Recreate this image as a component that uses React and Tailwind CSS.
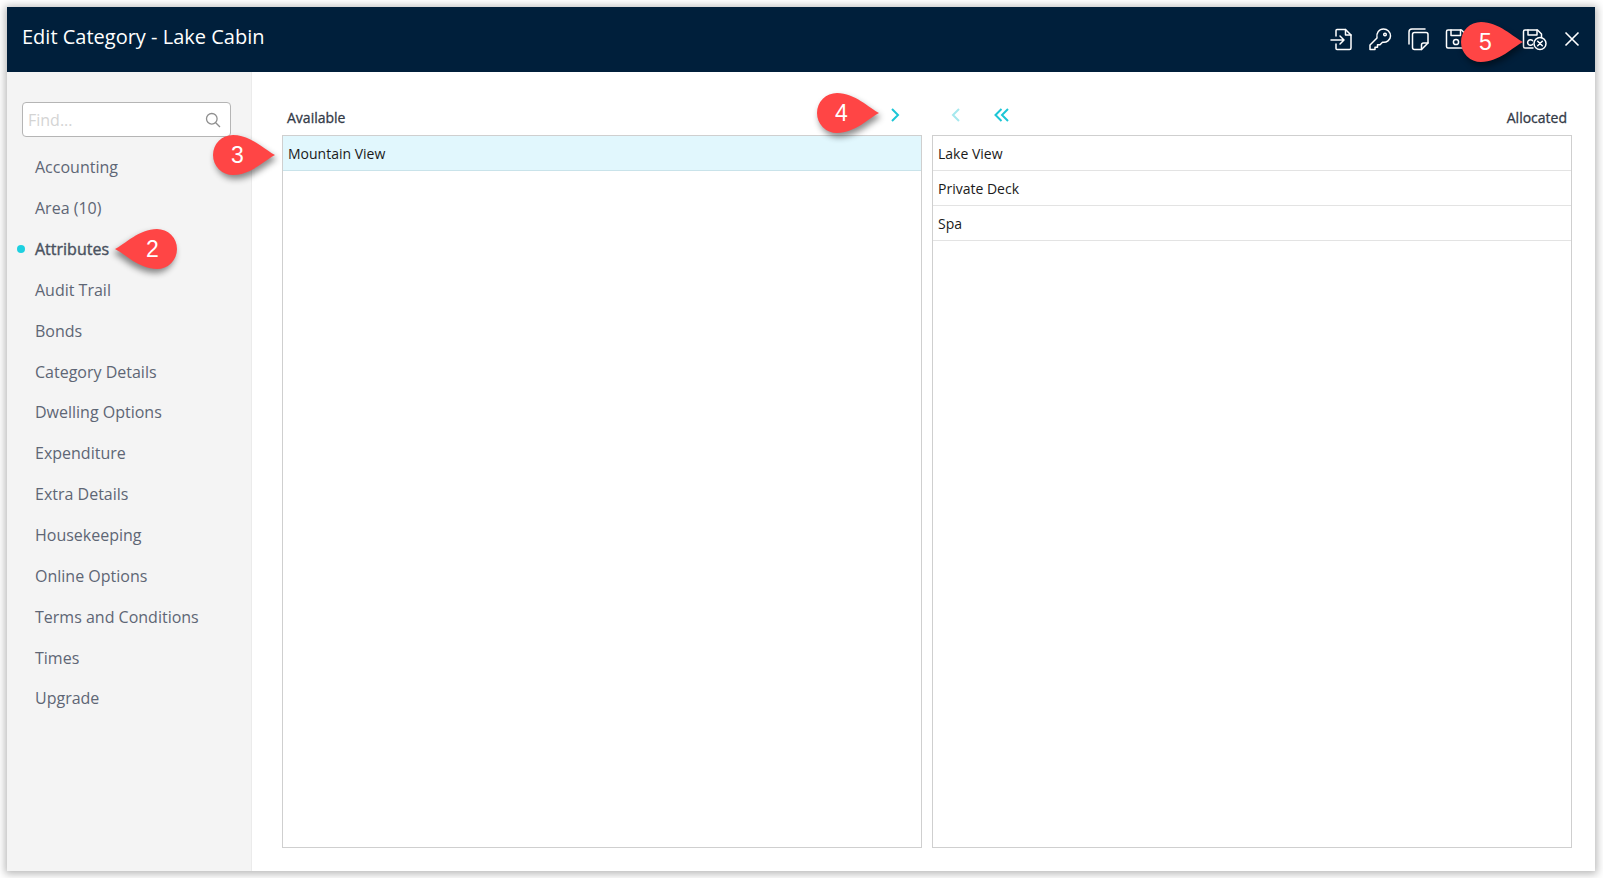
import React from "react";

const sideItems = ["Accounting","Area (10)","Attributes","Audit Trail","Bonds","Category Details","Dwelling Options","Expenditure","Extra Details","Housekeeping","Online Options","Terms and Conditions","Times","Upgrade"];

function Pin({ n, left, className }) {
  return (
    <div className={"absolute w-[62px] h-[40px] z-10 " + className}>
      <svg viewBox="0 0 62 40" className={"absolute inset-0 w-full h-full overflow-visible drop-shadow-[2px_4px_3px_rgba(0,0,0,0.45)] " + (left ? "-scale-x-100" : "")}>
        <path d="M62 20C52 15 38 0 20 0A20 20 0 0 0 20 40C38 40 52 25 62 20Z" fill="#ff4545" />
      </svg>
      <span className={"absolute top-0 h-[40px] w-[49px] flex items-center justify-center text-white text-[23px] font-['Liberation_Sans',sans-serif] " + (left ? "right-0" : "left-0")}>{n}</span>
    </div>
  );
}

const ic = { fill: "none", stroke: "#fff", strokeWidth: 1.5, strokeLinecap: "round", strokeLinejoin: "round" };

function IconIn() {
  return <svg width="24" height="24" viewBox="0 0 24 24" {...ic}><path d="M6 9V3.500A1 1 0 0 1 7 2.500H15.500L21 8V21A1.500 1.500 0 0 1 19.500 22.500H7A1 1 0 0 1 6 21.500V17" /><path d="M15.500 2.500V8H21" /><path d="M1 13H14M10 9L14 13L10 17" /></svg>;
}
function IconKey() {
  return <svg width="24" height="24" viewBox="0 0 24 24" {...ic}><path d="M15.500 2A7 7 0 0 1 22.500 9C22.500 13 18.500 16 14.500 15.200L12 17.700H9.500V20.200H7V22.500H2V18L9 11C8 6 11 2 15.500 2Z" /><circle cx="17" cy="7.500" r="1.300" /></svg>;
}
function IconCopy() {
  return <svg width="24" height="24" viewBox="0 0 24 24" {...ic}><path d="M3 17V5A3 3 0 0 1 6 2H19" /><path d="M8.500 5.500H20A2 2 0 0 1 22 7.500V16L15.500 22.500H8.500A2 2 0 0 1 6.500 20.500V7.500A2 2 0 0 1 8.500 5.500Z" /><path d="M22 16H17.500A2 2 0 0 0 15.500 18V22.500" /></svg>;
}
function IconSave() {
  return <svg width="24" height="24" viewBox="0 0 24 24" {...ic}><path d="M4 3H17.500L21.500 7V19.500A1.500 1.500 0 0 1 20 21H4A1.500 1.500 0 0 1 2.500 19.500V4.500A1.500 1.500 0 0 1 4 3Z" /><path d="M7 3V8.500H16.500V3" /><circle cx="12" cy="15" r="2.600" /></svg>;
}
function IconSaveX() {
  return <svg width="26" height="24" viewBox="0 0 26 24" {...ic}><path d="M12 21H4A1.500 1.500 0 0 1 2.500 19.500V4.500A1.500 1.500 0 0 1 4 3H16.500L20.500 7V10.500" /><path d="M7 3V8H16V3" /><path d="M11.500 13.600A2.800 2.800 0 1 0 11.500 17.400" /><circle cx="19" cy="16.500" r="6" /><path d="M16.700 14.200L21.300 18.800M21.300 14.200L16.700 18.800" /></svg>;
}
function IconClose() {
  return <svg width="18" height="18" viewBox="0 0 18 18" fill="none" stroke="#fff" strokeWidth="1.600"><path d="M2.500 2.500L15.500 15.500M15.500 2.500L2.500 15.500" /></svg>;
}
function IconSearch() {
  return <svg width="16" height="16" viewBox="0 0 16 16" fill="none" stroke="#8f8f8f" strokeWidth="1.300"><circle cx="6.800" cy="6.800" r="5.300" /><path d="M10.700 10.700L15 15" /></svg>;
}
function Chev({ d, className, width = 12 }) {
  return <svg width={width} height="14" viewBox={`0 0 ${width} 14`} fill="none" strokeWidth="2" className={className}><path d={d} stroke="currentColor" /></svg>;
}

function Row({ children, active }) {
  return (
    <div className={"h-[35px] pl-[5px] flex items-center border-b text-[14px] text-[#1a1a1a] " + (active ? "bg-[#e1f7fd] border-[#c9e3ea]" : "border-[#e3e3e3]")}>{children}</div>
  );
}

export default function App() {
  return (
    <div className="w-[1603px] h-[878px] pl-[7px] pt-[7px] pr-[8px] pb-[7px] bg-white overflow-hidden relative font-['Open_Sans',sans-serif]">
      <div className="w-full h-full flex flex-col bg-white shadow-[0_1px_8px_2px_rgba(0,0,0,0.28)]">
        <header className="h-[65px] shrink-0 bg-[#001f3b] flex items-center justify-between pl-[15px] pr-[14px]">
          <h1 className="text-[20px] text-white font-normal -mt-[5px]">Edit Category - Lake Cabin</h1>
          <div className="flex items-center gap-[14px] -mt-[2px]">
            <IconIn /><IconKey /><IconCopy /><IconSave />
            <div className="w-[25px]" />
            <IconSaveX />
            <div className="ml-[2px]"><IconClose /></div>
          </div>
        </header>
        <div className="flex-1 flex min-h-0">
          <aside className="w-[245px] shrink-0 bg-[#f4f4f4] border-r border-[#ebebeb] pt-[30px] pl-[15px] pr-[20px]">
            <div className="h-[35px] rounded-[4px] border border-[#b5b5b5] bg-white flex items-center justify-between pl-[5px] pr-[9px]">
              <span className="text-[16px] text-[#d4d4d4]">Find...</span>
              <IconSearch />
            </div>
            <nav className="mt-[10px] flex flex-col">
              {sideItems.map((s) => (
                <div key={s} className={"h-[40.85px] flex items-center pl-[13px] text-[16px] relative " + (s === "Attributes" ? "font-medium text-[#4a5260] [-webkit-text-stroke:0.4px_#4a5260]" : "text-[#5e6675]")}>
                  {s === "Attributes" && <span className="absolute -left-[5px] w-[8px] h-[8px] rounded-full bg-[#1dd0e0]" />}
                  {s}
                </div>
              ))}
            </nav>
          </aside>
          <main className="flex-1 min-w-0 pl-[30px] pr-[23px] pb-[23px] flex flex-col">
            <div className="grid grid-cols-2 gap-[10px] h-[63px] shrink-0 items-end pb-[7px]">
              <div className="flex items-center justify-between pl-[5px] pr-[21px]">
                <span className="text-[14px] font-medium text-[#333a47] [-webkit-text-stroke:0.3px_#333a47]">Available</span>
                <Chev d="M3 1L9 7L3 13" className="text-[#1cc6d6] -mt-[6px]" />
              </div>
              <div className="flex items-center pl-[18px] pr-[5px]">
                <Chev d="M9 1L3 7L9 13" className="text-[#a5e8ee] -mt-[6px]" />
                <Chev d="M8.500 1L2.500 7L8.500 13M15 1L9 7L15 13" width={18} className="text-[#1cc6d6] ml-[31px] -mt-[6px]" />
                <span className="ml-auto text-[14px] font-medium text-[#333a47] [-webkit-text-stroke:0.3px_#333a47]">Allocated</span>
              </div>
            </div>
            <div className="flex-1 grid grid-cols-2 gap-[10px] min-h-0">
              <div className="border border-[#cfcfcf]"><Row active>Mountain View</Row></div>
              <div className="border border-[#cfcfcf]">
                <Row>Lake View</Row><Row>Private Deck</Row><Row>Spa</Row>
              </div>
            </div>
          </main>
        </div>
      </div>
      <Pin n="2" left className="left-[115px] top-[229px]" />
      <Pin n="3" className="left-[213px] top-[135px]" />
      <Pin n="4" className="left-[817px] top-[93px]" />
      <Pin n="5" className="left-[1461px] top-[22px]" />
    </div>
  );
}
